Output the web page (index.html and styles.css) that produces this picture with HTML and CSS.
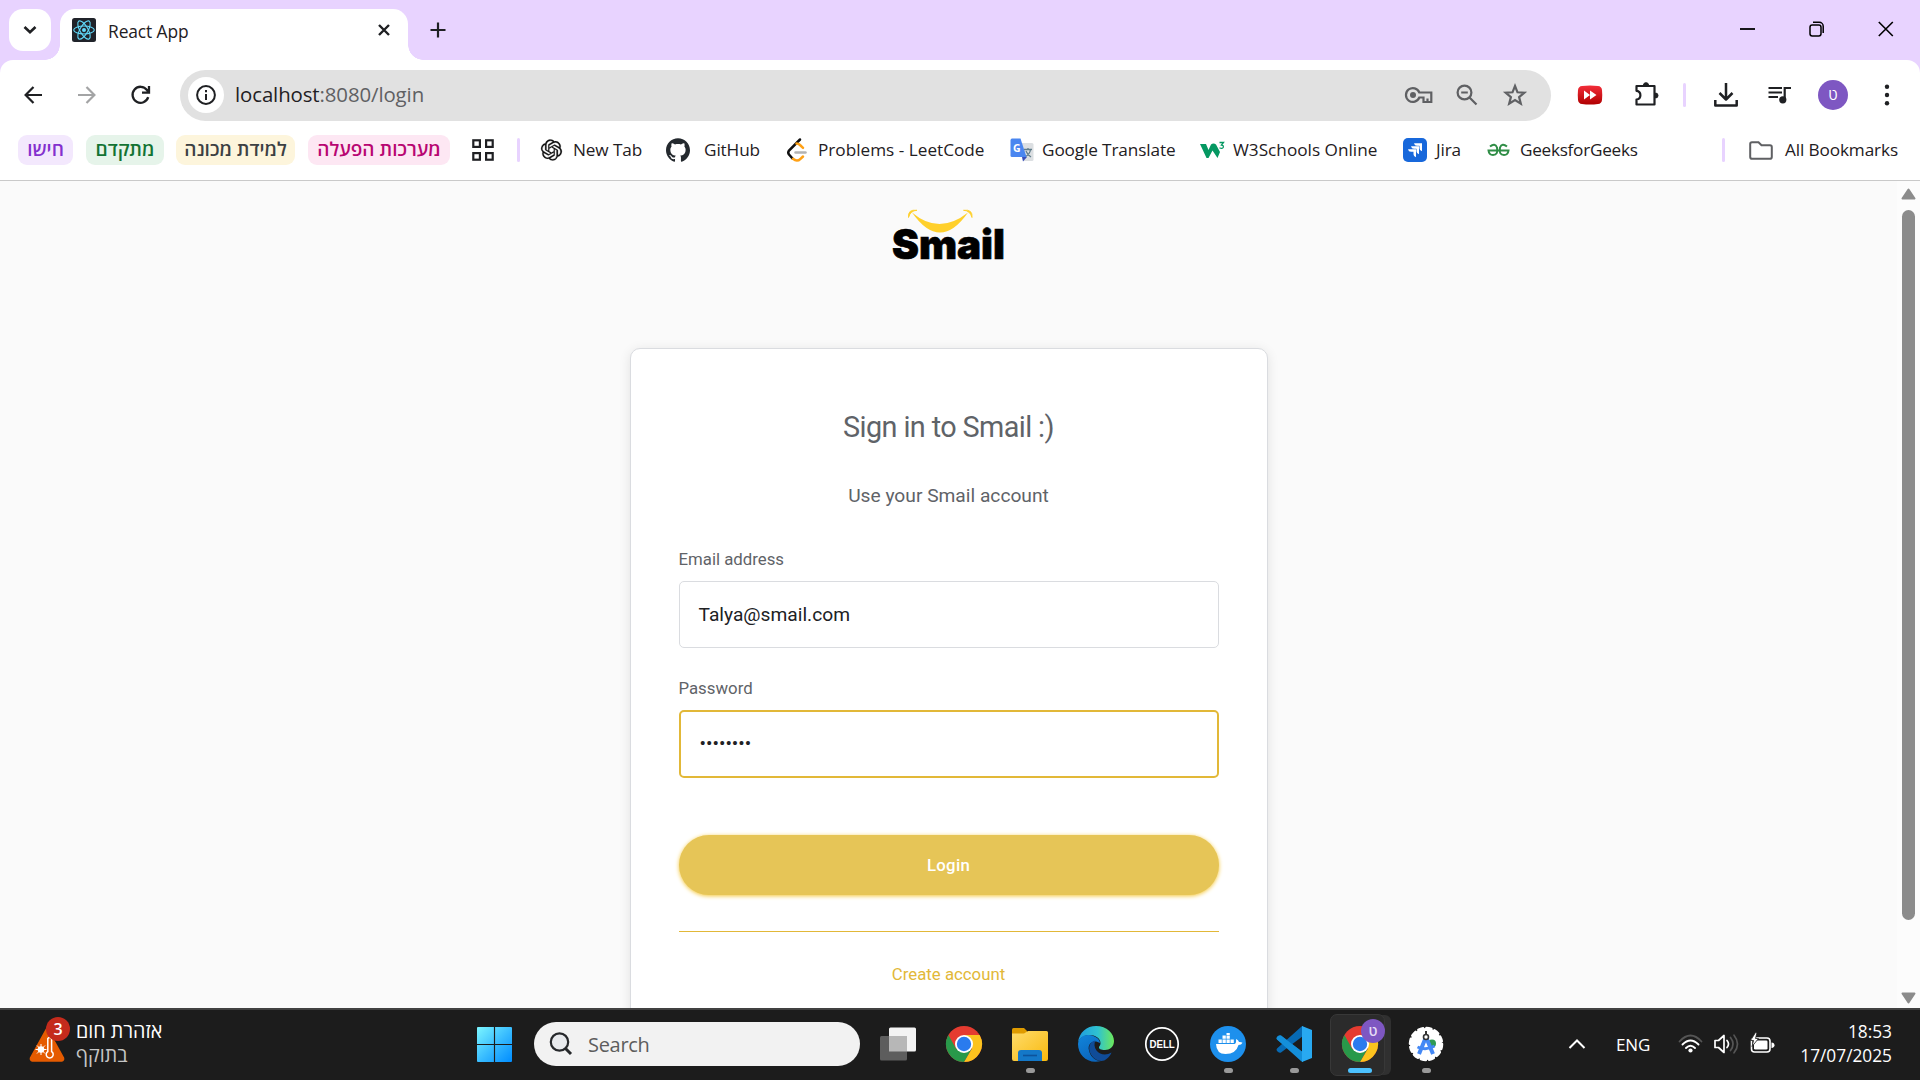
FILE: index.html
```html
<!DOCTYPE html>
<html lang="en">
<head>
<meta charset="utf-8">
<title>React App</title>
<link rel="stylesheet" href="styles.css">
</head>
<body>
<div class="screen">
  <header class="tabstrip">
    <button class="tab-search"><svg width="14" height="10" viewBox="0 0 14 10"><path d="M1.5 2l5.5 5.3L12.500 2" fill="none" stroke="#1f2023" stroke-width="2.600"/></svg></button>
    <div class="tab">
      <svg class="favicon" width="24" height="24" viewBox="0 0 24 24"><rect width="24" height="24" rx="2.500" fill="#20232a"/><g fill="none" stroke="#61dafb" stroke-width="1.100"><ellipse cx="12" cy="12" rx="10.300" ry="4"/><ellipse cx="12" cy="12" rx="10.300" ry="4" transform="rotate(60 12 12)"/><ellipse cx="12" cy="12" rx="10.300" ry="4" transform="rotate(120 12 12)"/></g><circle cx="12" cy="12" r="2" fill="#61dafb"/></svg>
      <span class="tab-title">React App</span>
      <svg class="tab-close" width="14" height="14" viewBox="0 0 14 14"><path d="M2 2l10 10M12 2L2 12" stroke="#1f2023" stroke-width="2.400"/></svg>
    </div>
    <svg class="new-tab" width="16" height="16" viewBox="0 0 16 16"><path d="M8 .500v15M.500 8h15" stroke="#1f2023" stroke-width="2.200"/></svg>
    <div class="window-buttons">
      <svg width="16" height="16" viewBox="0 0 16 16"><path d="M0 8h15" stroke="#000" stroke-width="1.800"/></svg>
      <svg width="16" height="16" viewBox="0 0 16 16" fill="none" stroke="#000" stroke-width="1.500"><rect x="1" y="4" width="11" height="11" rx="2.200"/><path d="M4 1.300h6.200a4 4 0 0 1 4 4V12"/></svg>
      <svg width="16" height="16" viewBox="0 0 16 16"><path d="M.800 1l14 14M14.800 1l-14 14" stroke="#000" stroke-width="1.600"/></svg>
    </div>
  </header>

  <nav class="toolbar">
    <svg class="t-back" width="18" height="18" viewBox="0 0 18 18" fill="none" stroke="#1f2023" stroke-width="2.200"><path d="M18 9H2M9.500 1L1.600 9l7.900 8"/></svg>
    <svg class="t-forward" width="18" height="18" viewBox="0 0 18 18" fill="none" stroke="#a3a4a5" stroke-width="2.200"><path d="M0 9h16M8.500 1l7.900 8-7.900 8"/></svg>
    <svg class="t-reload" width="20" height="20" viewBox="0 0 20 20" fill="none" stroke="#1f2023" stroke-width="2.300"><path d="M17.200 12.200A8 8 0 1 1 16 5l2 2.500M18 1v6.600h-7"/></svg>
    <div class="omnibox">
      <span class="site-info"><svg width="20" height="20" viewBox="0 0 20 20"><circle cx="10" cy="10" r="8.900" fill="none" stroke="#1f2023" stroke-width="2"/><path d="M10 9v6M10 5v2.200" stroke="#1f2023" stroke-width="2"/></svg></span>
      <span class="url">localhost<i>:8080/login</i></span>
      <svg class="o-key" width="28" height="18" viewBox="0 0 28 18" fill="none" stroke="#5f6063" stroke-width="2.200"><path d="M14.300 6.500A6.900 6.900 0 1 0 14.300 11.500H18.500V16H22.500V12.500V16H26.300V6.500Z"/><circle cx="8" cy="9" r="3" fill="#5f6063" stroke="none"/></svg>
      <svg class="o-zoom" width="22" height="22" viewBox="0 0 22 22" fill="none" stroke="#5f6063" stroke-width="2.200"><circle cx="8.500" cy="8.500" r="6.900"/><path d="M13.500 13.500l7 7M5.200 8.500h6.600"/></svg>
      <svg class="o-star" width="24" height="24" viewBox="0 0 24 24"><path d="M12 3l2.500 6.300 6.800.400-5.200 4.400 1.700 6.600L12 17.100l-5.800 3.600 1.700-6.600L2.700 9.700l6.800-.400z" fill="none" stroke="#5f6063" stroke-width="2.200"/></svg>
    </div>
    <svg class="t-fast" width="26" height="20" viewBox="0 0 26 20"><defs><linearGradient id="red" x2="0" y2="1"><stop stop-color="#f32e3a"/><stop offset="1" stop-color="#b00000"/></linearGradient></defs><path d="M5 1Q13 0 21 1q3.500.300 4 4 .500 5 0 10-.500 3.700-4 4-8 1-16 0-3.500-.300-4-4-.500-5 0-10 .500-3.700 4-4z" fill="url(#red)"/><path d="M7 5.500l6 4.500-6 4.500zM13 5.500l6.500 4.500-6.500 4.500z" fill="#fff"/></svg>
    <svg class="t-puzzle" width="26" height="26" viewBox="0 0 26 26"><path d="M2.500 5h18v18.500h-18v-5c5.200-.700 5.200-8 0-8.700z" fill="none" stroke="#1f2023" stroke-width="2.200" stroke-linejoin="round"/><path d="M9.500 4a2.500 2.300 0 0 1 5 0zM21.500 12a2.500 2.500 0 0 1 0 5z" fill="#1f2023" stroke="#1f2023"/></svg>
    <span class="divider"></span>
    <svg class="t-download" width="24" height="24" viewBox="0 0 24 24" fill="none" stroke="#1f2023" stroke-width="2.500"><path d="M12 0v16M5.500 10l6.500 6.500 6.500-6.500M1.300 17v5.500h21.400V17" stroke-linejoin="round"/></svg>
    <svg class="t-media" width="24" height="18" viewBox="0 0 24 18"><path d="M.500 2h13.500M.500 6.500h13.500M.500 11h9.500M16.700 14V2h6.300" fill="none" stroke="#1f2023" stroke-width="2.200"/><circle cx="14.800" cy="13.800" r="3.600" fill="#1f2023"/></svg>
    <span class="avatar">ט</span>
    <svg class="t-menu" width="6" height="22" viewBox="0 0 6 22" fill="#1f2023"><circle cx="3" cy="2.800" r="2.200"/><circle cx="3" cy="11" r="2.200"/><circle cx="3" cy="19.200" r="2.200"/></svg>
  </nav>

  <nav class="bookmarks">
    <span class="chip purple">חישו</span>
    <span class="chip green">מתקדם</span>
    <span class="chip yellow">למידת מכונה</span>
    <span class="chip pink">מערכות הפעלה</span>
    <svg class="apps" width="22" height="22" viewBox="0 0 22 22" fill="none" stroke="#1f2023" stroke-width="2.200"><rect x="1.300" y="1.300" width="6.600" height="6.600"/><rect x="14.100" y="1.300" width="6.600" height="6.600"/><rect x="1.300" y="14.100" width="6.600" height="6.600"/><rect x="14.100" y="14.100" width="6.600" height="6.600"/></svg>
    <span class="divider"></span>
    <a class="bm bm-newtab"><svg width="21" height="22" viewBox="0 0 24 24"><path fill="#111" stroke="#111" stroke-width=".300" d="M22.2819 9.8211a5.9847 5.9847 0 0 0-.5157-4.9108 6.0462 6.0462 0 0 0-6.5098-2.9A6.0651 6.0651 0 0 0 4.9807 4.1818a5.9847 5.9847 0 0 0-3.9977 2.9 6.0462 6.0462 0 0 0 .7427 7.0966 5.98 5.98 0 0 0 .511 4.9107 6.051 6.051 0 0 0 6.5146 2.9001A5.9847 5.9847 0 0 0 13.2599 24a6.0557 6.0557 0 0 0 5.7718-4.2058 5.9894 5.9894 0 0 0 3.9977-2.9001 6.0557 6.0557 0 0 0-.7475-7.0729zm-9.022 12.6081a4.4755 4.4755 0 0 1-2.8764-1.0408l.1419-.0804 4.7783-2.7582a.7948.7948 0 0 0 .3927-.6813v-6.7369l2.02 1.1686a.071.071 0 0 1 .038.052v5.5826a4.504 4.504 0 0 1-4.4945 4.4944zm-9.6607-4.1254a4.4708 4.4708 0 0 1-.5346-3.0137l.142.0852 4.783 2.7582a.7712.7712 0 0 0 .7806 0l5.8428-3.3685v2.3324a.0804.0804 0 0 1-.0332.0615L9.74 19.9502a4.4992 4.4992 0 0 1-6.1408-1.6464zM2.3408 7.8956a4.485 4.485 0 0 1 2.3655-1.9728V11.6a.7664.7664 0 0 0 .3879.6765l5.8144 3.3543-2.0201 1.1685a.0757.0757 0 0 1-.071 0l-4.8303-2.7865A4.504 4.504 0 0 1 2.3408 7.872zm16.5963 3.8558L13.1038 8.364 15.1192 7.2a.0757.0757 0 0 1 .071 0l4.8303 2.7913a4.4944 4.4944 0 0 1-.6765 8.1042v-5.6772a.79.79 0 0 0-.407-.667zm2.0107-3.0231l-.142-.0852-4.7735-2.7818a.7759.7759 0 0 0-.7854 0L9.409 9.2297V6.8974a.0662.0662 0 0 1 .0284-.0615l4.8303-2.7866a4.4992 4.4992 0 0 1 6.6802 4.66zM8.3065 12.863l-2.02-1.1638a.0804.0804 0 0 1-.038-.0567V6.0742a4.4992 4.4992 0 0 1 7.3757-3.4537l-.142.0805L8.704 5.459a.7948.7948 0 0 0-.3927.6813zm1.0976-2.3654l2.602-1.4998 2.6069 1.4998v2.9994l-2.5974 1.4997-2.6067-1.4997Z"/></svg><span>New Tab</span></a>
    <a class="bm bm-github"><svg width="24" height="24" viewBox="0 0 24 24"><path fill="#24292e" d="M12 .297c-6.63 0-12 5.373-12 12 0 5.303 3.438 9.8 8.205 11.385.6.113.82-.258.82-.577 0-.285-.01-1.04-.015-2.04-3.338.724-4.042-1.61-4.042-1.61C4.422 18.07 3.633 17.7 3.633 17.7c-1.087-.744.084-.729.084-.729 1.205.084 1.838 1.236 1.838 1.236 1.07 1.835 2.809 1.305 3.495.998.108-.776.417-1.305.76-1.605-2.665-.3-5.466-1.332-5.466-5.93 0-1.31.465-2.38 1.235-3.22-.135-.303-.54-1.523.105-3.176 0 0 1.005-.322 3.3 1.23.96-.267 1.98-.399 3-.405 1.02.006 2.04.138 3 .405 2.28-1.552 3.285-1.23 3.285-1.23.645 1.653.24 2.873.12 3.176.765.84 1.23 1.91 1.23 3.22 0 4.61-2.805 5.625-5.475 5.92.42.36.81 1.096.81 2.22 0 1.606-.015 2.896-.015 3.286 0 .315.21.69.825.57C20.565 22.092 24 17.592 24 12.297c0-6.627-5.373-12-12-12"/></svg><span>GitHub</span></a>
    <a class="bm bm-leet"><svg width="22" height="24" viewBox="0 0 22 24" fill="none" stroke-linecap="round" stroke-width="2.500"><path d="M14 1.500L3 12.500q-1.500 2 0 4L6.500 20.500" stroke="#111"/><path d="M7 20.800q4 3.500 7.500 0L17 18.500M10.500 5.500q2 0 3.500 1.500l3 2.800" stroke="#ffa116"/><path d="M9.500 14.500h10" stroke="#b3b3b3"/></svg><span>Problems - LeetCode</span></a>
    <a class="bm bm-translate"><svg width="24" height="24" viewBox="0 0 24 24"><path d="M9 5h13q1.500 0 1.500 1.500v15q0 1.500-1.500 1.500h-9z" fill="#dcdfe2"/><path d="M14 11.500h8M18 10v1.500M15 19q5-3 5.500-7.500M16 13q1.500 4 5 6" fill="none" stroke="#607d8b" stroke-width="1.300"/><path d="M12 19h5l-4 4.500z" fill="#3a4fb8"/><path d="M2 .500h8.500L16.500 19H2q-1.500 0-1.500-1.500v-15Q.500.500 2 .500z" fill="#4a86f0"/><text x="3" y="14" font-family="Open Sans" font-size="10.500" font-weight="700" fill="#fff">G</text></svg><span>Google Translate</span></a>
    <a class="bm bm-w3"><svg width="25" height="18" viewBox="0 0 25 18"><path d="M0 3h6l2.500 6L11 3.500q2.500-2 5 0L20 11l-2.500 6-5-7.500L8.500 17H6.500z" fill="#059862"/><path d="M19.500 1.500h4L21.500 4q2.200.200 1.800 2.200-1 2-3.800.500" fill="none" stroke="#059862" stroke-width="1.300"/></svg><span>W3Schools Online</span></a>
    <a class="bm bm-jira"><svg width="24" height="24" viewBox="0 0 24 24"><rect width="24" height="24" rx="5" fill="#1868db"/><path d="M11 6h8v8q-2.500-.500-2.500-3V8.500H14q-2.500 0-3-2.500zM8 9h8v8q-2.500-.500-2.500-3v-2.500H11q-2.500 0-3-2.500zM5 12h8v8q-2.500-.500-2.500-3v-2.500H8Q5.500 14.500 5 12z" fill="#fff" transform="translate(0 -.800)"/></svg><span>Jira</span></a>
    <a class="bm bm-gfg"><svg width="24" height="14" viewBox="0 0 24 14" fill="none" stroke="#2f8d46" stroke-width="2"><path d="M3 3.500Q8-.500 10 4.500 11.500 12 6 12 2 12 1.500 7.500H21.500Q21 12 17 12q-5.500 0-4-7.500 2-5 7-1"/></svg><span>GeeksforGeeks</span></a>
    <span class="divider"></span>
    <a class="bm bm-all"><svg width="24" height="19" viewBox="0 0 24 19"><path d="M3 1.300h6.500l3 3H21q1.800 0 1.800 1.800v9.800q0 1.800-1.800 1.800H3q-1.800 0-1.800-1.800V3.100Q1.200 1.300 3 1.300z" fill="none" stroke="#5f6063" stroke-width="2"/></svg><span>All Bookmarks</span></a>
  </nav>

  <main class="viewport">
    <section class="page">
      <svg class="logo" width="120" height="58" viewBox="0 0 120 58"><path d="M23 4.500Q50 27.500 79 4.500 51 44.500 23 4.500z" fill="#ffd02b"/><path d="M19.500 9.500Q18.500 1 28 2.300 21.500 2.500 19.500 9.500zM74.500 2.300Q84 1 83 9.500 81 2.500 74.500 2.300z" fill="#ffd02b" stroke="#ffd02b" stroke-width=".900"/><text x="3" y="50.500" textLength="113" lengthAdjust="spacingAndGlyphs" class="logo-text">Smail</text></svg>
      <form class="card">
        <h1>Sign in to Smail :)</h1>
        <p class="sub">Use your Smail account</p>
        <label>Email address</label>
        <div class="field">Talya@smail.com</div>
        <label class="second">Password</label>
        <div class="field focused"><span>••••••••</span></div>
        <button type="button" class="login">Login</button>
        <hr>
        <a class="create">Create account</a>
      </form>
    </section>
    <aside class="scrollbar">
      <svg width="15" height="12" viewBox="0 0 15 12"><path d="M7.500 1.500L13.500 10.500H1.500z" fill="#8b8b8b" stroke="#8b8b8b" stroke-width="2" stroke-linejoin="round"/></svg>
      <span class="thumb"></span>
      <svg class="down" width="15" height="12" viewBox="0 0 15 12"><path d="M7.500 10.500L13.500 1.500H1.500z" fill="#8b8b8b" stroke="#8b8b8b" stroke-width="2" stroke-linejoin="round"/></svg>
    </aside>
  </main>

  <footer class="taskbar">
    <div class="weather">
      <span class="alert"><svg width="36" height="35" viewBox="0 0 36 35"><path d="M18 2L34 31q.500 2-1.500 2.500H3.500Q1.500 33 2 31z" fill="#e55b00" stroke="#e55b00" stroke-width="2.500" stroke-linejoin="round"/><circle cx="12" cy="22.500" r="3.300" fill="#fff"/><path d="M12 17v11M6.500 22.500h11M8 18.500l8 8M16 18.500l-8 8" stroke="#fff" stroke-width="1"/><path d="M18.800 24.500V11.500q1.900-2 3.800 0v13a3.500 3.500 0 1 1-3.800 0z" fill="#e55b00" stroke="#fff" stroke-width="1.500"/></svg><b>3</b></span>
      <div class="weather-text" dir="rtl"><span>אזהרת חום</span><small>בתוקף</small></div>
    </div>
    <svg class="start" width="35" height="35" viewBox="0 0 36 36"><defs><linearGradient id="win" x2="1" y2="1"><stop stop-color="#7cf6ff"/><stop offset=".550" stop-color="#35b9ff"/><stop offset="1" stop-color="#008cff"/></linearGradient></defs><path fill="url(#win)" d="M1 0h16.400v17.400H0V1Q0 0 1 0zM18.600 0H35q1 0 1 1v16.400H18.600zM0 18.600h17.400V36H1q-1 0-1-1zM18.600 18.600H36V35q0 1-1 1H18.600z"/></svg>
    <div class="search"><svg width="24" height="24" viewBox="0 0 24 24" fill="none" stroke="#26282b"><circle cx="10.500" cy="10" r="8.700" fill="#e8eaed" stroke-width="2.200"/><path d="M16.500 16.500l5.500 5.500" stroke-width="3"/></svg><span>Search</span></div>
    <div class="apps-row">
      <span class="app"><svg width="36" height="36" viewBox="0 0 36 36"><rect x="9" y="1.500" width="27" height="24" rx="1.500" fill="#f3f3f3"/><rect y="10" width="27" height="24.500" rx="1.500" fill="#5d5d5d"/><path d="M9 10h18v15.500H9z" fill="#b7b7b7"/></svg></span>
      <span class="app"><svg width="36" height="36" viewBox="0 0 36 36"><defs><g id="chrome"><circle cx="18" cy="18" r="18" fill="#e53b30"/><path d="M18 9h15.600A18 18 0 0 1 18 36l8-13.500z" fill="#fcc31e"/><path d="M2.400 9A18 18 0 0 0 18 36l7.800-13.500L18 27l-8-4.500z" fill="#28994a"/><circle cx="18" cy="18" r="9" fill="#fff"/><circle cx="18" cy="18" r="7.200" fill="#2a7bee"/></g></defs><use href="#chrome"/></svg></span>
      <span class="app running"><svg width="36" height="36" viewBox="0 0 36 36"><defs><linearGradient id="fold" x2="1" y2="1"><stop stop-color="#ffdc6b"/><stop offset="1" stop-color="#f8b90e"/></linearGradient></defs><path d="M1.500 2H12l3 3v5H0V3.500Q0 2 1.500 2z" fill="#df9b00"/><path d="M0 7.500h12l4-2.500h18.500Q36 5 36 6.500V33q0 2-2 2H2q-2 0-2-2z" fill="url(#fold)"/><path d="M6 35V27q0-3 3-3h18q3 0 3 3v8z" fill="#1478c8"/><path d="M11 29.500h14" stroke="#0d539b" stroke-width="1.600"/></svg></span>
      <span class="app"><svg width="36" height="36" viewBox="0 0 36 36"><defs><linearGradient id="edgeTop"><stop stop-color="#1f9ce0"/><stop offset=".550" stop-color="#2fc2d0"/><stop offset="1" stop-color="#6de95b"/></linearGradient><linearGradient id="edgeLow" x2=".500" y2="1"><stop stop-color="#1185db"/><stop offset="1" stop-color="#0b66bd"/></linearGradient></defs><path d="M0 17C1 6 9 0 18 0c11 0 18 7.500 18 15 0 6-4.500 9-9 9-4 0-6.500-1.300-6-3 .500-1 1.500-1.800 1.500-3.800C22.500 12 17 9 11.500 9 5 9 1 13 0 17z" fill="url(#edgeTop)"/><path d="M0 18C.500 12 5 8.500 11 9c6 .500 11 4 11 8-6-4-13 0-11 7.500 1.500 6 6 10.500 12 10.500C10 38.500 0 29.500 0 18z" fill="url(#edgeLow)"/><path d="M17.500 14.500C12 15 9 22 13 28.500c4.500 7 12 8 15.500 4.500 2.500-2 4.500-4.500 5-6.500-5 3-11.500 2.500-15-2-2.500-3.500-2.500-7-1-10z" fill="#104c98"/></svg></span>
      <span class="app"><svg width="36" height="36" viewBox="0 0 36 36"><circle cx="18" cy="18" r="16.200" fill="none" stroke="#fff" stroke-width="1.700"/><text x="5.400" y="22" textLength="25.400" lengthAdjust="spacingAndGlyphs" font-family="Liberation Sans" font-size="11" font-weight="700" fill="#fff">DELL</text></svg></span>
      <span class="app running"><svg width="36" height="36" viewBox="0 0 36 36"><circle cx="18" cy="18" r="18" fill="#1d90ed"/><path d="M6 18h18.500q2-.500 1.500-5 2.500 1 3 3 2-.300 3.500.700-1 2.300-4 2.300Q26 28 15.500 28 6.500 28 6 18z" fill="#fff"/><path d="M8.500 13.500h3.300V17H8.500zM12.500 13.500h3.300V17h-3.300zM16.500 13.500h3.300V17h-3.300zM20.500 13.500h3.300V17h-3.300zM12.500 9.500h3.300v3.300h-3.300zM16.500 9.500h3.300v3.300h-3.300zM16.500 7h3.300v2h-3.300z" fill="#fff"/></svg></span>
      <span class="app running"><svg width="36" height="36" viewBox="0 0 36 36"><path d="M1 11q1.500-2.500 4-1.500L28 27v8L1 13.500Q0 12 1 11z" fill="#1077bb"/><path d="M1 22.500L25 1q1-1 2-1v10L5 26.500q-2 1-4-1.500-1-1.500 0-2.500z" fill="#076ab4"/><path d="M1 13.500L25 35q1 1 2 1V26.500L5 9.500Q2.500 9 1 11q-1 1.500 0 2.500z" fill="#148fda"/><path d="M26 0l10 4v28l-10 4z" fill="#28a9f1"/></svg></span>
      <span class="app active"><svg width="36" height="36" viewBox="0 0 36 36"><use href="#chrome"/></svg><i>ט</i></span>
      <span class="app running"><svg width="36" height="36" viewBox="0 0 36 36"><circle cx="18" cy="18" r="16" fill="#fff"/><circle cx="18" cy="18" r="16" fill="none" stroke="#fff" stroke-width="2.500" stroke-dasharray="5 3.370" stroke-linecap="round"/><circle cx="24" cy="17.500" r="4" fill="#2f9b54"/><path d="M18 11L11 28M18 11l7 17" stroke="#4388f5" stroke-width="4"/><path d="M9.500 21q8.500 4 17-1" fill="none" stroke="#4388f5" stroke-width="3"/><path d="M18 5v4" stroke="#333" stroke-width="2"/><circle cx="18" cy="11" r="2.500" fill="#fff" stroke="#333" stroke-width="1.600"/></svg></span>
    </div>
    <div class="tray">
      <svg class="t-chev" width="18" height="12" viewBox="0 0 18 12"><path d="M1.500 10L9 2.500l7.500 7.500" fill="none" stroke="#fff" stroke-width="2"/></svg>
      <span class="lang">ENG</span>
      <svg class="t-wifi" width="25" height="20" viewBox="0 0 25 20" fill="none" stroke-linecap="round"><path d="M1.500 7.500q11-12 22 0" stroke="#555" stroke-width="1.800"/><path d="M4.500 10.500q8-8 16 0M8 14q4.500-4.500 9 0" stroke="#fff" stroke-width="1.900"/><circle cx="12.500" cy="16.500" r="2.100" fill="#fff"/></svg>
      <svg class="t-vol" width="25" height="20" viewBox="0 0 25 20" fill="none" stroke-linecap="round" stroke-linejoin="round"><path d="M1 6.500h3.500L10 1.500v17l-5.500-5H1zM13 6.500q3 3.500 0 7" stroke="#fff" stroke-width="1.700"/><path d="M16.500 3.500q5 6.500 0 13M20 1.200q7 8.800 0 17.600" stroke="#555" stroke-width="1.700"/></svg>
      <svg class="t-bat" width="25" height="20" viewBox="0 0 25 20"><rect x="1.500" y="4" width="18.500" height="14" rx="3" fill="none" stroke="#fff" stroke-width="1.600"/><rect x="4" y="6.500" width="13.500" height="9" rx="1.300" fill="#fff"/><path d="M21.500 8.500q3 .300 3 2.700t-3 2.700z" fill="#fff"/><path d="M5.500-1.500L.500 6.500h3L2 12.500l6.500-8H5.500L7-1.500z" fill="#fff" stroke="#1c1c1c" stroke-width=".800"/></svg>
      <div class="clock"><span>18:53</span><span>17/07/2025</span></div>
    </div>
  </footer>
</div>
</body>
</html>
```
FILE: styles.css
```css
* { box-sizing: border-box; }
body { margin: 0; font-family: "Open Sans", "Noto Sans", "DejaVu Sans", sans-serif; color: #1f2023; }
svg { display: block; flex: none; overflow: visible; }
button { border: 0; padding: 0; font: inherit; }
.screen { width: 1920px; height: 1080px; display: flex; flex-direction: column; overflow: hidden; background: linear-gradient(#e8d3ff 100px, #fff 100px); }

/* tab strip */
.tabstrip { flex: none; height: 60px; background: #e8d3ff; display: flex; align-items: flex-start; padding: 9px 21px 0 9px; }
.tab-search { width: 42px; height: 42px; border-radius: 14px; background: #fff; display: grid; place-items: center; }
.tab { position: relative; width: 348px; height: 51px; margin-left: 9px; padding: 0 17px 9px 12px; border-radius: 15px 15px 0 0; background: #fff; display: flex; align-items: center; }
.tab::before, .tab::after { content: ""; position: absolute; bottom: 0; width: 15px; height: 15px; }
.tab::before { right: 100%; background: radial-gradient(circle at 0 0, transparent 14.5px, #fff 15px); }
.tab::after { left: 100%; background: radial-gradient(circle at 100% 0, transparent 14.5px, #fff 15px); }
.tab-title { margin-left: 12px; padding-top: 2px; font-size: 17.400px; letter-spacing: -.1px; }
.tab-close { margin-left: auto; }
.new-tab { margin: 13px 0 0 22px; }
.window-buttons { margin: 12px 0 0 auto; padding-right: 5px; display: flex; gap: 53px; }

/* toolbar */
.toolbar { flex: none; height: 70px; background: #fff; border-radius: 13px 13px 0 0; display: flex; align-items: center; padding-left: 24px; }
.t-forward { margin-left: 36px; }
.t-reload { margin-left: 35px; }
.omnibox { margin-left: 29px; width: 1371px; height: 51px; border-radius: 26px; background: #e1e1e1; display: flex; align-items: center; padding-left: 8px; }
.site-info { width: 36px; height: 36px; border-radius: 50%; background: #fff; display: grid; place-items: center; }
.url { margin-left: 11px; padding-bottom: 2px; font-size: 20.400px; letter-spacing: -.100px; white-space: nowrap; }
.url i { font-style: normal; color: #5f6063; }
.o-key { margin-left: auto; }
.o-zoom { margin-left: 23px; }
.o-star { margin: 0 24px 0 25px; }
.t-fast { margin-left: 26px; }
.t-puzzle { margin: -3px 0 0 31px; }
.divider { width: 3px; height: 24px; border-radius: 2px; background: #e8d3ff; }
.toolbar .divider { margin-left: 23px; }
.t-download { margin-left: 28px; }
.t-media { margin-left: 30px; }
.avatar { margin-left: 26px; width: 30px; height: 30px; border-radius: 50%; background: #7e57c2; color: #fff; font-size: 15px; line-height: 29px; text-align: center; }
.t-menu { margin-left: 36px; }

/* bookmarks */
.bookmarks { flex: none; height: 51px; background: #fff; border-bottom: 1px solid #c9c9c9; padding: 5px 0 0 18px; display: grid; align-items: center; align-content: start;
  grid-template-columns: 68px 90px 132px 164px 45px 24px 125px 120px 224px 190px 203px 84px 235px 27px auto; grid-template-rows: 30px; }
.chip { height: 30px; border-radius: 9px; font-size: 19px; line-height: 28px; font-weight: 600; text-align: center; white-space: nowrap; direction: rtl; }
.purple { width: 55px; background: #f3e8fd; color: #8430ce; }
.green { width: 78px; background: #e6f4ea; color: #137333; }
.yellow { width: 119px; background: #fdf5dc; color: #3c4043; }
.pink { width: 142px; background: #fde7f3; color: #b80672; }
.bm { display: flex; align-items: center; white-space: nowrap; font-size: 17.200px; letter-spacing: -.120px; }
.bm span { padding-bottom: 2px; }
.bm-newtab svg { margin-right: 11px; }
.bm-github svg { margin-right: 14px; }
.bm-leet svg { margin-right: 10px; }
.bm-leet { letter-spacing: 0; }
.bm-w3 { letter-spacing: 0; }
.bm-gfg { letter-spacing: -.280px; }
.bm-translate svg { margin-right: 8px; }
.bm-w3 svg { margin-right: 8px; }
.bm-jira svg { margin-right: 9px; }
.bm-gfg svg { margin-right: 9px; }
.bm-all svg { margin-right: 12px; }

/* page */
.viewport { flex: none; height: 827px; display: flex; overflow: hidden; background: #fafafa; font-family: Roboto, sans-serif; }
.page { flex: 1; display: flex; flex-direction: column; align-items: center; padding-top: 27px; }
.logo-text { font-family: Inter, "Open Sans", sans-serif; font-weight: 900; font-size: 41px; fill: #000; stroke: #000; stroke-width: .7px; }
.card { flex: none; width: 638px; height: 760px; margin-top: 82px; padding: 61px 48px 0; border: 1px solid #dadce0; border-radius: 10px; background: #fff; box-shadow: 0 2px 12px rgba(0,0,0,.1); display: flex; flex-direction: column; color: #5f6368; }
h1 { margin: 0; font-size: 28.800px; font-weight: 400; line-height: 34px; letter-spacing: -.600px; text-align: center; }
.sub { margin: 38px 0 0; font-size: 19.200px; line-height: 28px; text-align: center; }
label { margin-top: 37px; padding-top: 1px; font-size: 16.800px; line-height: 22px; }
label.second { margin-top: 28px; }
.field { margin-top: 11px; height: 67px; border: 1px solid #dadce0; border-radius: 5px; padding: 0 19px; font-size: 19.200px; line-height: 66px; color: #202124; }
.focused { height: 68px; border: 2px solid #e2b838; line-height: 64px; padding: 0 19px; }
.login { margin-top: 57px; height: 60px; padding-bottom: 1px; border-radius: 30px; background: #e6c557; color: #fff; font-size: 16.800px; font-weight: 500; letter-spacing: .300px; box-shadow: 0 1px 4px #f4c637; }
hr { width: 100%; height: 1px; border: 0; margin: 36px 0 0; background: #e2b838; }
.create { margin-top: 31px; font-size: 16.800px; line-height: 22px; text-align: center; color: #e2b838; }
.scrollbar { width: 23px; background: #fcfcfc; padding: 7px 0 4px; display: flex; flex-direction: column; align-items: center; }
.thumb { width: 13px; height: 710px; margin-top: 10px; border-radius: 6.500px; background: #8b8b8b; }
.down { margin-top: auto; }

/* taskbar */
.taskbar { flex: none; height: 72px; background: #1c1c1c; border-top: 2px solid #414141; padding-bottom: 2px; display: flex; align-items: center; color: #fff; }
.weather { width: 448px; margin-left: 29px; display: flex; align-items: center; }
.alert { position: relative; }
.alert b { position: absolute; left: 17px; top: -10px; width: 24px; height: 24px; border-radius: 50%; background: #c42b1c; font-size: 16px; line-height: 24px; font-weight: 600; text-align: center; }
.weather-text { margin-left: 11px; padding-bottom: 2px; display: flex; flex-direction: column; font-size: 19.700px; line-height: 24px; text-align: left; white-space: nowrap; }
.weather-text small { font-size: 19.700px; color: #c5c5c5; }
.search { width: 326px; height: 44px; margin-left: 22px; border-radius: 22px; background: #f2f2f2; display: flex; align-items: center; padding-left: 15px; color: #5d5d5d; }
.search span { margin-left: 15px; font-size: 20px; letter-spacing: -.3px; }
.apps-row { display: flex; margin-left: 5px; }
.app { position: relative; width: 66px; height: 60px; display: grid; place-items: center; }
.running::after, .active::after { content: ""; position: absolute; left: 29px; bottom: 1px; width: 9px; height: 5px; border-radius: 3px; background: #999; }
.active::before { content: ""; position: absolute; left: 3px; top: 0; width: 53px; height: 60px; border-radius: 7px; background: #2b2b2b; border: 1px solid #383838; box-shadow: 7px 0 0 -1px #303030; }
.active svg { position: relative; }
.active::after { left: 21px; width: 24px; background: #4cc2ff; }
.active i { position: absolute; left: 34px; top: 5px; width: 24px; height: 24px; border-radius: 50%; background: #7e57c2; color: #e6dcf6; font: 600 14px/23px "Open Sans", sans-serif; text-align: center; }
.tray { margin-left: auto; padding-right: 28px; display: flex; align-items: center; white-space: nowrap; font-size: 17px; }
.lang { margin-left: 30px; width: 35px; letter-spacing: -.1px; }
.t-wifi { margin-left: 27px; }
.t-vol { margin-left: 11px; }
.t-bat { margin-left: 11px; }
.clock { margin-left: 25px; width: 92px; display: flex; flex-direction: column; align-items: flex-end; line-height: 24px; font-size: 17.300px; letter-spacing: 0; }
```
